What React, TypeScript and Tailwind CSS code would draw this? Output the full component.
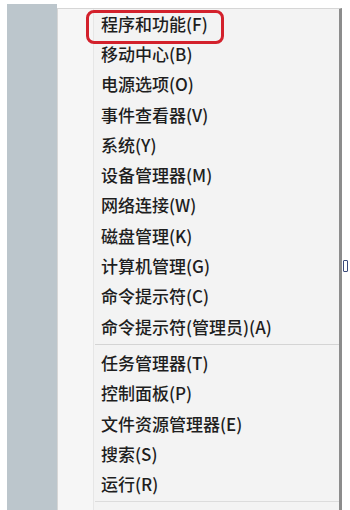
const topItems = [
  '程序和功能(F)',
  '移动中心(B)',
  '电源选项(O)',
  '事件查看器(V)',
  '系统(Y)',
  '设备管理器(M)',
  '网络连接(W)',
  '磁盘管理(K)',
  '计算机管理(G)',
  '命令提示符(C)',
  '命令提示符(管理员)(A)',
]

const bottomItems = ['任务管理器(T)', '控制面板(P)', '文件资源管理器(E)', '搜索(S)', '运行(R)']

function Item({ label }: { label: string }) {
  return (
    <div className="h-[30.3px] flex items-center pl-[43px] text-[17px] leading-none font-medium text-[#1e1e1e] whitespace-nowrap">
      {label}
    </div>
  )
}

export default function App() {
  return (
    <div
      className="relative w-[350px] h-[510px] overflow-hidden bg-white flex items-start"
      style={{ fontFamily: '"Noto Sans CJK SC", "Noto Sans", sans-serif' }}
    >
      {/* desktop strip on the left */}
      <div className="w-[7px] shrink-0" />
      <div className="w-[50px] h-[506px] mt-[4px] shrink-0 bg-[#bcc6cc]" />

      {/* context menu */}
      <div className="relative w-[285px] h-[502px] mt-[8px] shrink-0 bg-[#f3f3f3] border-t border-l border-[#d6d6d6] border-r-[3px] border-r-[#8c8c8c]">
        <div className="absolute left-0 top-0 bottom-0 w-[36px] bg-[#f6f6f6] border-r border-[#e6e6e6]" />
        <div className="relative -mt-[1px]">
          {topItems.map(t => (
            <Item key={t} label={t} />
          ))}
          <div className="h-[6px] flex items-center pl-[37px]">
            <div className="h-px w-full bg-[#d4d4d4]" />
          </div>
          {bottomItems.map(t => (
            <Item key={t} label={t} />
          ))}
          <div className="h-[6px] flex items-center pl-[37px]">
            <div className="h-px w-full bg-[#dcdcdc]" />
          </div>
        </div>

        {/* red highlight around first item */}
        <div className="absolute left-[28px] top-[1px] w-[138px] h-[34px] rounded-[8px] border-[3px] border-[#d3212c]" />
      </div>

      {/* bit of a window behind the menu */}
      <div className="absolute left-[343px] top-[260px] w-[5px] h-[12px] border border-[#3a4a7a] rounded-[1px]" />
    </div>
  )
}
